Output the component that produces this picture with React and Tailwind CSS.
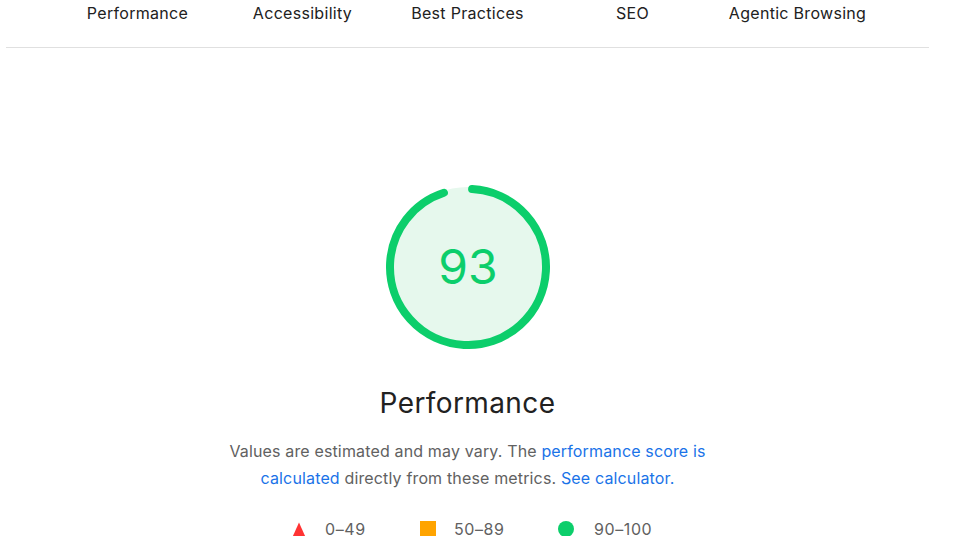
const tabs = ['Performance', 'Accessibility', 'Best Practices', 'SEO', 'Agentic Browsing'];

const Gauge = ({ score }) => {
  const r = 78;
  const c = 2 * Math.PI * r;
  const len = (score / 100) * c + 5;
  return (
    <svg width="164" height="164" viewBox="0 0 164 164">
      <circle cx="82" cy="82" r="80" fill="#e6f8ed" />
      <circle
        cx="82"
        cy="82"
        r={r}
        fill="none"
        stroke="#0cce6b"
        strokeWidth="8"
        strokeLinecap="round"
        strokeDasharray={`${len} ${c}`}
        transform="rotate(-87 82 82)"
      />
      <text
        x="82"
        y="99"
        textAnchor="middle"
        fill="#0cce6b"
        fontSize="48"
        fontFamily="Inter, 'Noto Sans', sans-serif"
      >
        {score}
      </text>
    </svg>
  );
};

export default function App() {
  return (
    <div className="w-[962px] h-[536px] overflow-hidden bg-white font-['Inter','Noto_Sans',sans-serif]">
      <div className="ml-[6px] w-[923px]">
        <div className="flex justify-center h-[48px] border-b border-[#e0e0e0] pt-[3px]">
          {tabs.map((t) => (
            <div key={t} className="w-[165px] text-center text-[16px] leading-[21px] tracking-[0.3px] text-[#212121]">
              {t}
            </div>
          ))}
        </div>

        <div className="flex flex-col items-center pt-[137px]">
          <Gauge score={93} />
          <div className="mt-[37px] text-[28px] leading-[34px] tracking-[0.4px] text-[#212121]">Performance</div>
          <p className="mt-[18px] w-[500px] text-center text-[16px] leading-[27px] tracking-[0.15px] text-[#616161]">
            Values are estimated and may vary. The{' '}
            <a className="text-[#1a73e8]" href="#">performance score is calculated</a>{' '}
            directly from these metrics.{' '}
            <a className="text-[#1a73e8]" href="#">See calculator.</a>
          </p>
          <div className="mt-[27px] pl-[12px] flex items-center text-[16px] leading-[20px] tracking-[0.6px] text-[#616161]">
            <div className="flex items-center w-[128px]">
              <svg width="14" height="15" viewBox="0 0 14 15" className="mr-[19px]">
                <polygon points="7,0.5 13.5,15 0.5,15" fill="#ff3333" />
              </svg>
              <span>0–49</span>
            </div>
            <div className="flex items-center w-[138px]">
              <span className="mr-[18px] w-[16px] h-[16px] bg-[#ffa400]" />
              <span>50–89</span>
            </div>
            <div className="flex items-center w-[97px]">
              <span className="mr-[20px] w-[16px] h-[16px] rounded-full bg-[#0cce6b]" />
              <span>90–100</span>
            </div>
          </div>
        </div>
      </div>
    </div>
  );
}
